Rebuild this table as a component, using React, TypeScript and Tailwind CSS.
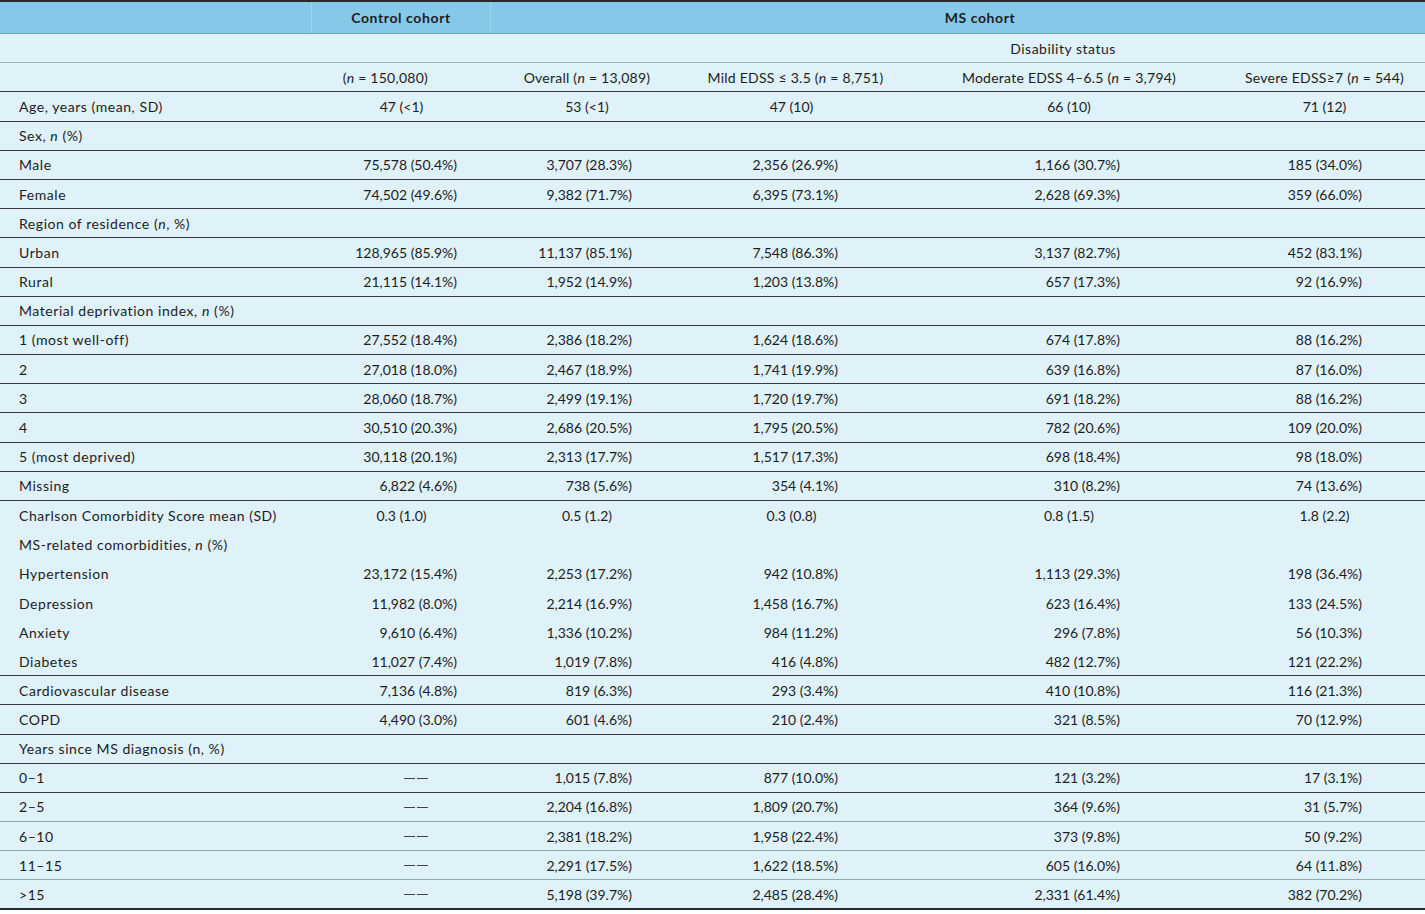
import React from "react";

type Border = "dark" | "light" | "none" | "bottom";
type Row = {
  label: React.ReactNode;
  cells?: string[];
  kind?: "pct" | "center";
  border: Border;
};

const cols = "grid grid-cols-[312px_179px_192px_217px_338px_187px]";

const it = (s: string) => <span className="italic">{s}</span>;

const rows: Row[] = [
  { label: "Age, years (mean, SD)", cells: ["47 (<1)", "53 (<1)", "47 (10)", "66 (10)", "71 (12)"], kind: "center", border: "dark" },
  { label: <>Sex, {it("n")} (%)</>, border: "dark" },
  { label: "Male", cells: ["75,578 (50.4%)", "3,707 (28.3%)", "2,356 (26.9%)", "1,166 (30.7%)", "185 (34.0%)"], kind: "pct", border: "dark" },
  { label: "Female", cells: ["74,502 (49.6%)", "9,382 (71.7%)", "6,395 (73.1%)", "2,628 (69.3%)", "359 (66.0%)"], kind: "pct", border: "dark" },
  { label: <>Region of residence ({it("n")}, %)</>, border: "dark" },
  { label: "Urban", cells: ["128,965 (85.9%)", "11,137 (85.1%)", "7,548 (86.3%)", "3,137 (82.7%)", "452 (83.1%)"], kind: "pct", border: "dark" },
  { label: "Rural", cells: ["21,115 (14.1%)", "1,952 (14.9%)", "1,203 (13.8%)", "657 (17.3%)", "92 (16.9%)"], kind: "pct", border: "dark" },
  { label: <>Material deprivation index, {it("n")} (%)</>, border: "dark" },
  { label: "1 (most well-off)", cells: ["27,552 (18.4%)", "2,386 (18.2%)", "1,624 (18.6%)", "674 (17.8%)", "88 (16.2%)"], kind: "pct", border: "dark" },
  { label: "2", cells: ["27,018 (18.0%)", "2,467 (18.9%)", "1,741 (19.9%)", "639 (16.8%)", "87 (16.0%)"], kind: "pct", border: "dark" },
  { label: "3", cells: ["28,060 (18.7%)", "2,499 (19.1%)", "1,720 (19.7%)", "691 (18.2%)", "88 (16.2%)"], kind: "pct", border: "dark" },
  { label: "4", cells: ["30,510 (20.3%)", "2,686 (20.5%)", "1,795 (20.5%)", "782 (20.6%)", "109 (20.0%)"], kind: "pct", border: "dark" },
  { label: "5 (most deprived)", cells: ["30,118 (20.1%)", "2,313 (17.7%)", "1,517 (17.3%)", "698 (18.4%)", "98 (18.0%)"], kind: "pct", border: "dark" },
  { label: "Missing", cells: ["6,822 (4.6%)", "738 (5.6%)", "354 (4.1%)", "310 (8.2%)", "74 (13.6%)"], kind: "pct", border: "dark" },
  { label: "Charlson Comorbidity Score mean (SD)", cells: ["0.3 (1.0)", "0.5 (1.2)", "0.3 (0.8)", "0.8 (1.5)", "1.8 (2.2)"], kind: "center", border: "none" },
  { label: <>MS-related comorbidities, {it("n")} (%)</>, border: "none" },
  { label: "Hypertension", cells: ["23,172 (15.4%)", "2,253 (17.2%)", "942 (10.8%)", "1,113 (29.3%)", "198 (36.4%)"], kind: "pct", border: "none" },
  { label: "Depression", cells: ["11,982 (8.0%)", "2,214 (16.9%)", "1,458 (16.7%)", "623 (16.4%)", "133 (24.5%)"], kind: "pct", border: "none" },
  { label: "Anxiety", cells: ["9,610 (6.4%)", "1,336 (10.2%)", "984 (11.2%)", "296 (7.8%)", "56 (10.3%)"], kind: "pct", border: "none" },
  { label: "Diabetes", cells: ["11,027 (7.4%)", "1,019 (7.8%)", "416 (4.8%)", "482 (12.7%)", "121 (22.2%)"], kind: "pct", border: "dark" },
  { label: "Cardiovascular disease", cells: ["7,136 (4.8%)", "819 (6.3%)", "293 (3.4%)", "410 (10.8%)", "116 (21.3%)"], kind: "pct", border: "dark" },
  { label: "COPD", cells: ["4,490 (3.0%)", "601 (4.6%)", "210 (2.4%)", "321 (8.5%)", "70 (12.9%)"], kind: "pct", border: "dark" },
  { label: "Years since MS diagnosis (n, %)", border: "dark" },
  { label: "0–1", cells: ["——", "1,015 (7.8%)", "877 (10.0%)", "121 (3.2%)", "17 (3.1%)"], kind: "pct", border: "dark" },
  { label: "2–5", cells: ["——", "2,204 (16.8%)", "1,809 (20.7%)", "364 (9.6%)", "31 (5.7%)"], kind: "pct", border: "light" },
  { label: "6–10", cells: ["——", "2,381 (18.2%)", "1,958 (22.4%)", "373 (9.8%)", "50 (9.2%)"], kind: "pct", border: "light" },
  { label: "11–15", cells: ["——", "2,291 (17.5%)", "1,622 (18.5%)", "605 (16.0%)", "64 (11.8%)"], kind: "pct", border: "light" },
  { label: ">15", cells: ["——", "5,198 (39.7%)", "2,485 (28.4%)", "2,331 (61.4%)", "382 (70.2%)"], kind: "pct", border: "bottom" },
];

// right padding so the percentage columns line up like the printed table
const pctPad = ["pr-[34px]", "pr-[51px]", "pr-[62px]", "pr-[118px]", "pr-[63px]"];
const centerPad = ["pl-0", "pl-0", "pl-0", "pl-0", "pr-[14px]"];

const borderCls: Record<Border, string> = {
  dark: "border-b border-[#3a3a3a]",
  light: "border-b border-[#9aa6ad]",
  none: "",
  bottom: "border-b-2 border-[#2a2a2a]",
};

function Cell({ value, i, kind }: { value: string; i: number; kind?: string }) {
  if (value === "——") {
    // two short rules, the "not applicable" mark
    return (
      <div className="flex items-center justify-center gap-[2px] pl-[29px] pt-[1px]">
        <div className="w-[11px] h-px bg-[#444]" />
        <div className="w-[11px] h-px bg-[#444]" />
      </div>
    );
  }
  if (kind === "pct") {
    return <div className={`flex items-center justify-end ${pctPad[i]}`}>{value}</div>;
  }
  return <div className={`flex items-center justify-center ${centerPad[i]}`}>{value}</div>;
}

export default function App() {
  return (
    <div className="w-[1425px] h-[914px] bg-white text-[14px] text-[#1d1d1d] font-['Lato',sans-serif]">
      <div className="bg-[#dff1f9]">
        {/* top header */}
        <div className={`${cols} h-[34px] bg-[#86c8e7] border-t-2 border-[#2a2a2a] border-b border-b-[#7a9fb2] font-bold tracking-[0.6px]`}>
          <div className="border-r border-[#a3d6ee]" />
          <div className="flex items-center justify-center border-r border-[#a3d6ee]">Control cohort</div>
          <div className="col-span-4 flex items-center justify-center pl-[44px]">MS cohort</div>
        </div>
        <div className={`${cols} h-[29.2px] border-b border-[#a4aeb4]`}>
          <div className="col-span-3" />
          <div className="col-span-3 flex items-center justify-center pl-[18px] tracking-[0.5px]">Disability status</div>
        </div>
        <div className={`${cols} h-[29.2px] border-b border-[#3a3a3a] tracking-[0.25px]`}>
          <div />
          <div className="flex items-center justify-end pr-[63px]">
            <span>(<span className="italic">n</span> = 150,080)</span>
          </div>
          <div className="flex items-center justify-center">
            <span>Overall (<span className="italic">n</span> = 13,089)</span>
          </div>
          <div className="flex items-center justify-center pl-[8px]">
            <span>Mild EDSS ≤ 3.5 (<span className="italic">n</span> = 8,751)</span>
          </div>
          <div className="flex items-center justify-center">
            <span>Moderate EDSS 4–6.5 (<span className="italic">n</span> = 3,794)</span>
          </div>
          <div className="flex items-center justify-center pr-[14px]">
            <span>Severe EDSS≥7 (<span className="italic">n</span> = 544)</span>
          </div>
        </div>
        {rows.map((r, idx) => (
          <div key={idx} className={`${cols} h-[29.2px] ${borderCls[r.border]}`}>
            <div className="flex items-center pl-[19px] whitespace-nowrap tracking-[0.55px]">
              <span>{r.label}</span>
            </div>
            {r.cells?.map((c, i) => (
              <Cell key={i} value={c} i={i} kind={r.kind} />
            ))}
          </div>
        ))}
      </div>
    </div>
  );
}
